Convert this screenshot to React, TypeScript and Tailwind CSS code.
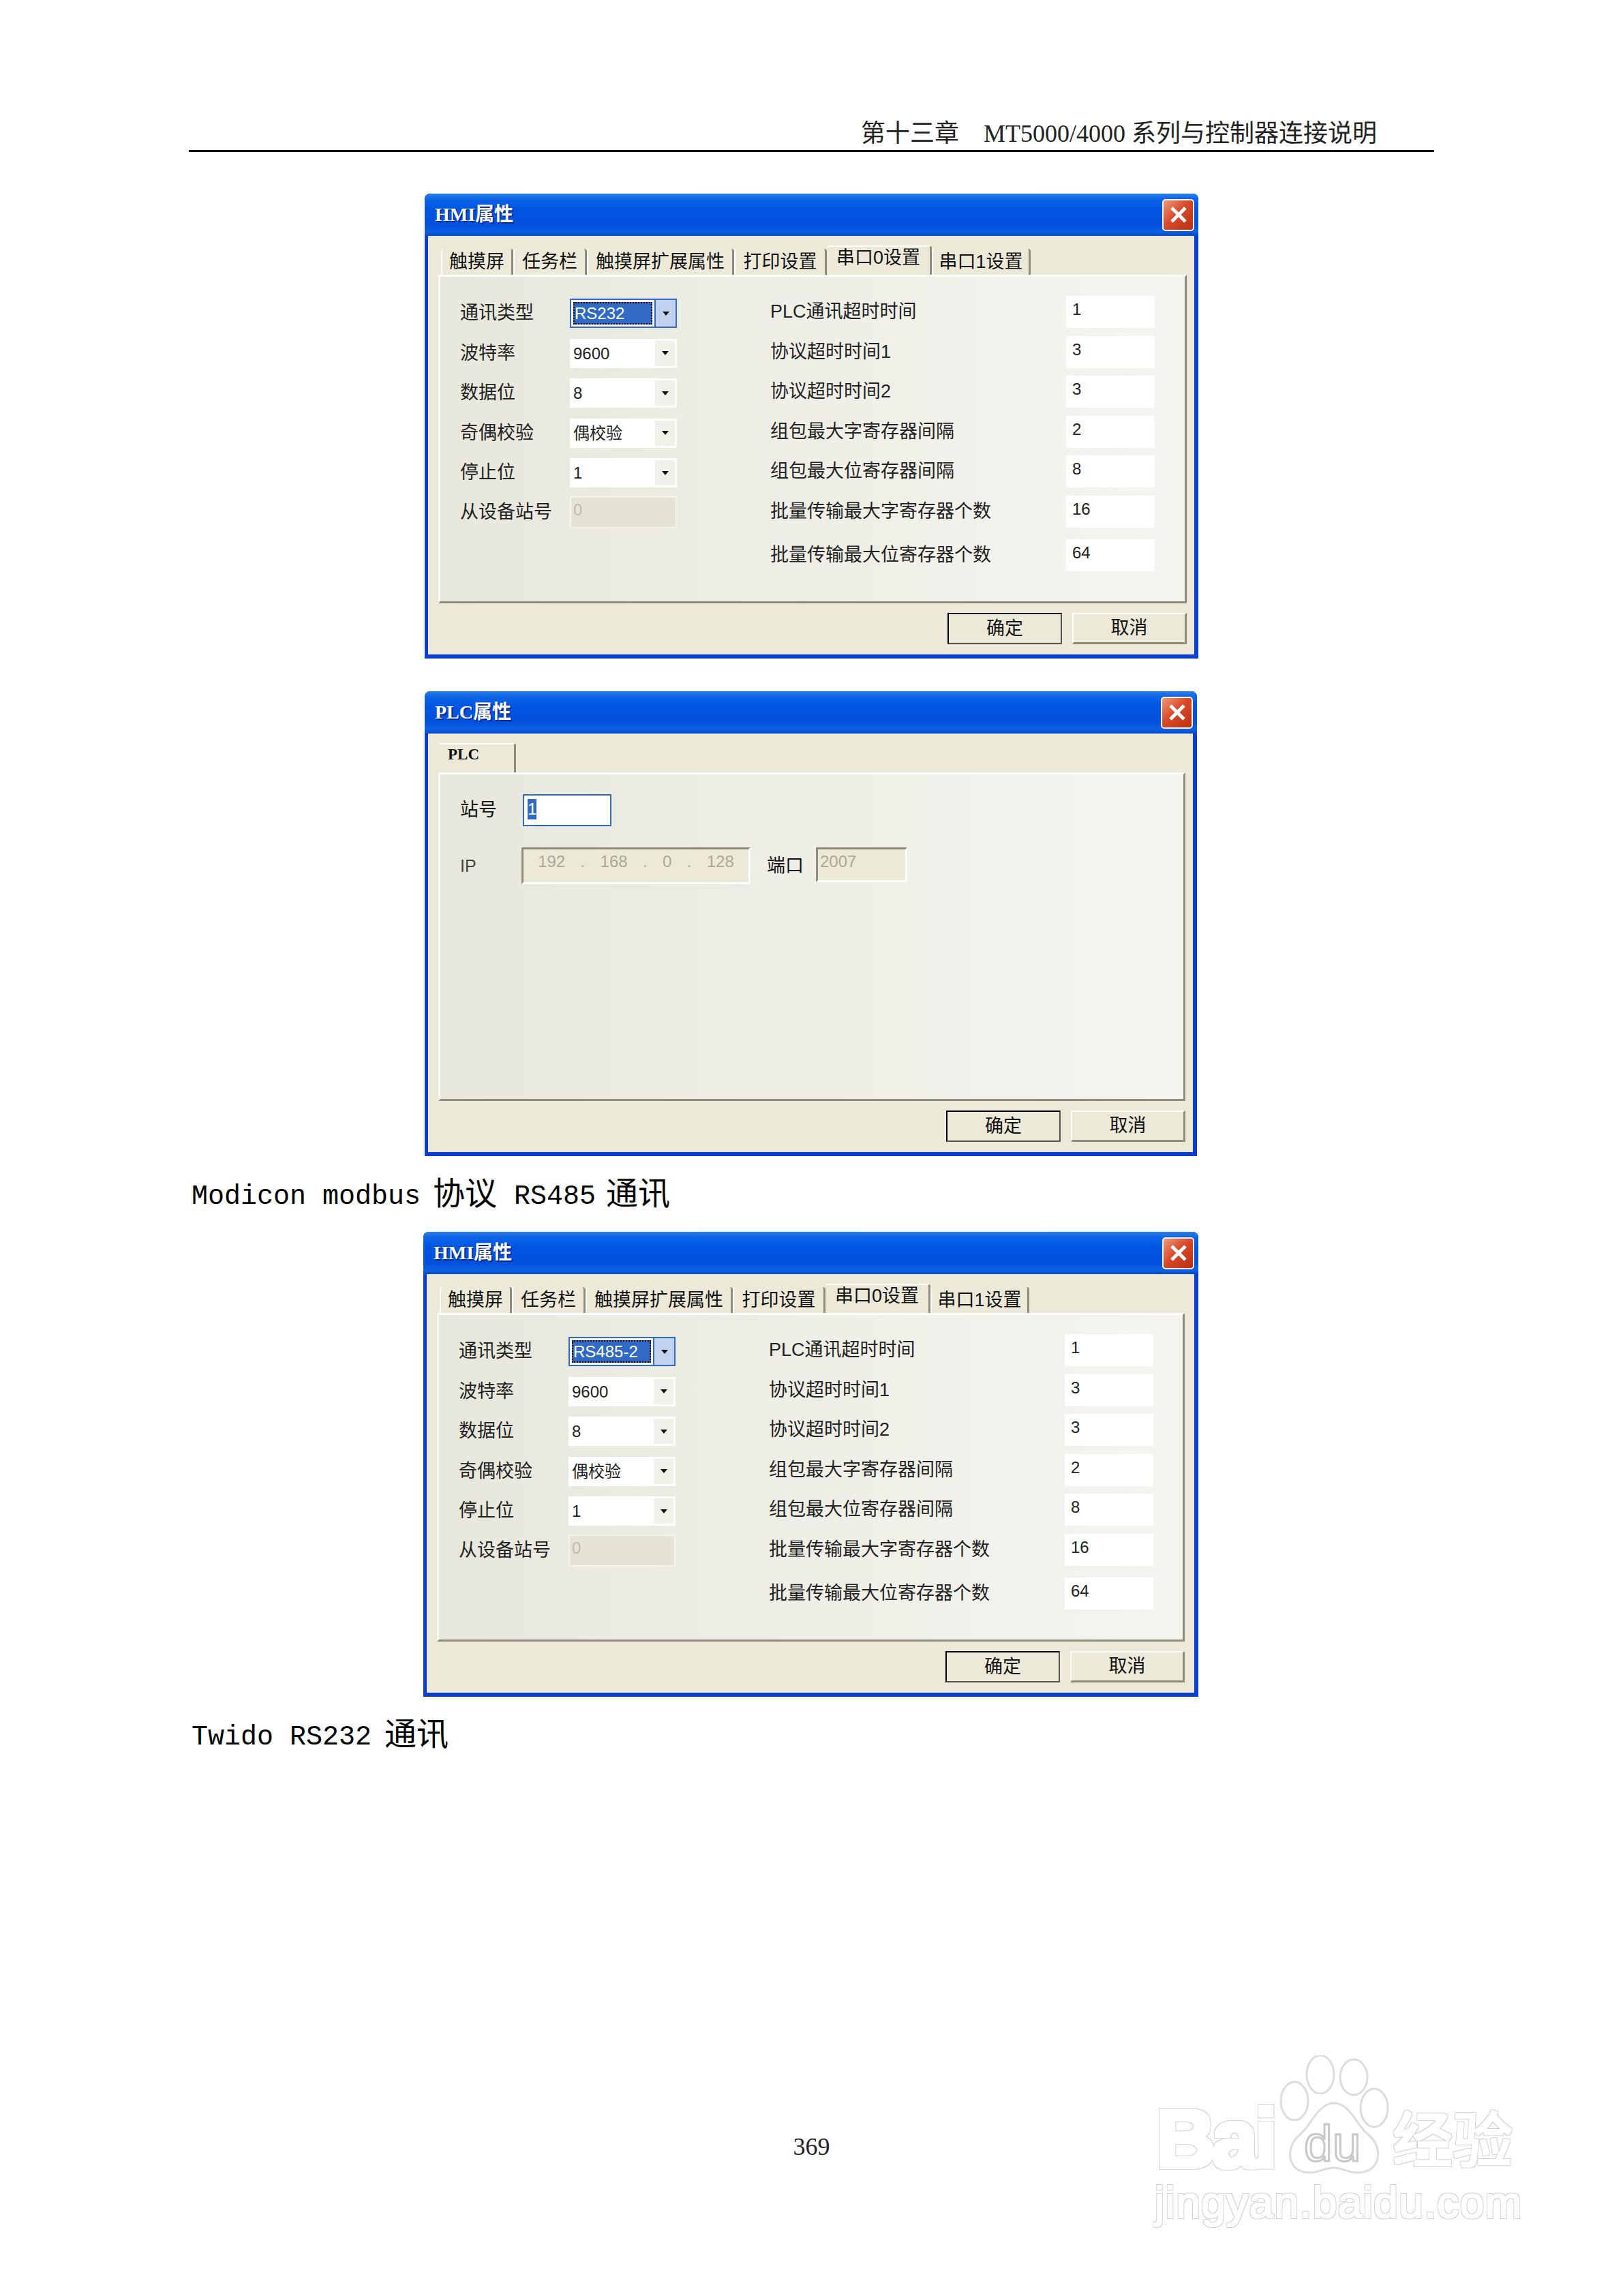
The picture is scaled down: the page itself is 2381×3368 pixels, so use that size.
import type { ReactNode } from "react";

const uiFont = "font-['Liberation_Sans','Noto_Sans_CJK_SC',sans-serif]";

const portTabs = [
  { label: "触摸屏", w: "w-[106px]" },
  { label: "任务栏", w: "w-[108px]" },
  { label: "触摸屏扩展属性", w: "w-[216px]" },
  { label: "打印设置", w: "w-[136px]" },
  { label: "串口0设置", w: "w-[154px]", active: true },
  { label: "串口1设置", w: "w-[145px]" },
];

const timeouts = [
  ["PLC通讯超时时间", "1"],
  ["协议超时时间1", "3"],
  ["协议超时时间2", "3"],
  ["组包最大字寄存器间隔", "2"],
  ["组包最大位寄存器间隔", "8"],
  ["批量传输最大字寄存器个数", "16"],
];

function Arrow() {
  return (
    <svg width="12" height="8" viewBox="0 0 12 8">
      <path d="M1 1h10L6 7z" fill="#111" />
    </svg>
  );
}

function Combo({ value, focused }: { value: string; focused?: boolean }) {
  if (focused) {
    return (
      <div className="w-[157px] h-[43px] flex bg-white border-2 border-[#316ac5]">
        <div className="flex-1 p-[3px]">
          <div className="h-full border-2 border-dotted border-black bg-[#316ac5] text-white text-[24px] leading-[30px] overflow-hidden">
            {value}
          </div>
        </div>
        <div className="w-[31px] flex items-center justify-center bg-[#c1d2ee] border-l-2 border-[#316ac5]">
          <Arrow />
        </div>
      </div>
    );
  }
  return (
    <div className="w-[157px] h-[43px] flex bg-white p-[3px]">
      <div className="flex-1 text-[24px] leading-[38px] pl-[2px] text-[#222]">{value}</div>
      <div className="w-[29px] flex items-center justify-center bg-[#f1f0e9]">
        <Arrow />
      </div>
    </div>
  );
}

function CloseButton() {
  return (
    <div className="w-[47px] h-[47px] rounded-[5px] border-2 border-[#f2f2f2] bg-[linear-gradient(135deg,#ee9a7c,#d9492a_45%,#b8300f)] flex items-center justify-center">
      <svg width="30" height="30" viewBox="0 0 30 30">
        <path d="M5 5l20 20M25 5L5 25" stroke="#fff" strokeWidth="5" />
      </svg>
    </div>
  );
}

function Dialog({
  title,
  width,
  bodyPad = "pr-[11px]",
  tabs,
  children,
}: {
  title: string;
  width: string;
  bodyPad?: string;
  tabs: ReactNode;
  children: ReactNode;
}) {
  return (
    <div className={`${width} h-[682px] flex flex-col rounded-t-[8px] overflow-hidden bg-[#0a3ed0] ${uiFont}`}>
      <div className="h-[62px] shrink-0 flex items-center justify-between pl-[15px] pr-[6px] bg-[linear-gradient(180deg,#2a7fe8_0%,#0f66e6_12%,#0055e3_35%,#0450dc_75%,#0a62e4_90%,#0848c8_100%)]">
        <span className="text-white font-bold text-[28px] leading-none [text-shadow:2px_2px_0_#0a2a90] font-['Liberation_Serif','Noto_Sans_CJK_SC',serif]">
          {title}
        </span>
        <CloseButton />
      </div>
      <div className={`flex-1 ml-[5px] mr-[6px] mb-[6px] bg-[#ece9d8] flex flex-col pl-[15px] ${bodyPad}`}>
        <div className="h-[43px] mt-[14px] shrink-0 flex items-end pl-[4px] text-[27px] text-[#111]">{tabs}</div>
        <div className="h-[482px] shrink-0 border-t-[3px] border-l-[3px] border-t-white border-l-[#f8f8f4] border-r-[3px] border-b-[3px] border-r-[#8e8c7c] border-b-[#8e8c7c] bg-[linear-gradient(90deg,#e7e7dc,#f0f0e9_60%,#f5f5f0)]">
          {children}
        </div>
        <div className="flex justify-end gap-[15px] pt-[14px]">
          <div className="w-[168px] h-[46px] border-2 border-black border-r-[#555] border-b-[#555] bg-[#ece9d8] flex items-center justify-center text-[27px] text-[#111]">
            确定
          </div>
          <div className="w-[168px] h-[46px] border-2 border-white border-r-[3px] border-b-[3px] border-r-[#8e8c7c] border-b-[#8e8c7c] bg-[#ece9d8] flex items-center justify-center text-[27px] text-[#111]">
            取消
          </div>
        </div>
      </div>
    </div>
  );
}

function PortTabs() {
  return (
    <>
      {portTabs.map((t) =>
        t.active ? (
          <div
            key={t.label}
            className={`${t.w} h-[43px] rounded-t-[4px] border-t-2 border-t-white border-r-[3px] border-r-[#8e8c7c] bg-[#ece9d8] text-center leading-[32px]`}
          >
            {t.label}
          </div>
        ) : (
          <div
            key={t.label}
            className={`${t.w} h-[38px] rounded-t-[4px] border-l-2 border-l-white border-r-[3px] border-r-[#8e8c7c] text-center leading-[38px]`}
          >
            {t.label}
          </div>
        ),
      )}
    </>
  );
}

function PortForm({ type }: { type: string }) {
  const left = [
    ["通讯类型", type],
    ["波特率", "9600"],
    ["数据位", "8"],
    ["奇偶校验", "偶校验"],
    ["停止位", "1"],
  ];
  return (
    <div className="flex pl-[29px] pt-[28px] text-[27px] text-[#222]">
      <div className="w-[455px] pt-[4px] flex flex-col gap-[15.5px]">
        {left.map(([label, value], i) => (
          <div key={label} className="flex items-center">
            <span className="w-[161px] leading-[43px]">{label}</span>
            <Combo value={value} focused={i === 0} />
          </div>
        ))}
        <div className="flex items-center -mt-[3px]">
          <span className="w-[161px] leading-[47px]">从设备站号</span>
          <div className="w-[157px] h-[47px] bg-[#e5e3d4] border-2 border-[#f4f3ec] text-[24px] leading-[36px] pl-[3px] text-[#bdbbae]">
            0
          </div>
        </div>
      </div>
      <div className="flex flex-col gap-[11.5px]">
        {timeouts.map(([label, value]) => (
          <div key={label} className="flex items-center">
            <span className="w-[434px] leading-[47px]">{label}</span>
            <div className="w-[130px] h-[47px] bg-white text-[24px] leading-[40px] pl-[9px]">{value}</div>
          </div>
        ))}
        <div className="flex items-center mt-[6px]">
          <span className="w-[434px] leading-[47px]">批量传输最大位寄存器个数</span>
          <div className="w-[130px] h-[47px] bg-white text-[24px] leading-[40px] pl-[9px]">64</div>
        </div>
      </div>
    </div>
  );
}

function PlcForm() {
  return (
    <div className="pl-[29px] pt-[29px] text-[27px] text-[#111]">
      <div className="flex items-center">
        <span className="w-[92px]">站号</span>
        <div className="w-[130px] h-[47px] bg-white border-2 border-[#316ac5] p-[5px] text-[24px] leading-[30px]">
          <span className="inline-block bg-[#316ac5] text-white">1</span>
        </div>
      </div>
      <div className="flex items-start mt-[31px]">
        <span className="w-[90px] leading-[54px] text-[25px] text-[#444]">IP</span>
        <div className="w-[336px] h-[54px] bg-[#ece9d8] border-[3px] border-t-[#8f8c7a] border-l-[#8f8c7a] border-r-white border-b-white flex justify-around px-[10px] text-[24px] leading-[36px] text-[#aca899]">
          <span>192</span>
          <span>.</span>
          <span>168</span>
          <span>.</span>
          <span>0</span>
          <span>.</span>
          <span>128</span>
        </div>
        <span className="ml-[24px] w-[72px] leading-[54px]">端口</span>
        <div className="w-[134px] h-[51px] bg-[#ece9d8] border-[3px] border-t-[#8f8c7a] border-l-[#8f8c7a] border-r-white border-b-white pl-[3px] text-[24px] leading-[36px] text-[#aca899]">
          2007
        </div>
      </div>
    </div>
  );
}

function Caption({ children }: { children: ReactNode }) {
  return (
    <div className="h-[111px] pl-[281px] pt-[8px] flex items-center whitespace-pre text-black text-[40px] font-['Liberation_Mono','Noto_Sans_CJK_SC',monospace]">
      {children}
    </div>
  );
}

function BaiduMark() {
  const outline = { fill: "#ffffff", stroke: "#dcdcdc", strokeWidth: 3 };
  return (
    <svg className="absolute left-[1691px] top-[3015px] blur-[0.5px]" width="544" height="258" viewBox="0 0 544 258">
      <defs>
        <filter id="fat" x="-5%" y="-10%" width="110%" height="120%">
          <feMorphology in="SourceAlpha" operator="dilate" radius="4" result="outer" />
          <feFlood floodColor="#d4d4d4" />
          <feComposite in2="outer" operator="in" result="edge" />
          <feMorphology in="SourceAlpha" operator="dilate" radius="2.5" result="inner" />
          <feFlood floodColor="#ffffff" />
          <feComposite in2="inner" operator="in" result="face" />
          <feMerge>
            <feMergeNode in="edge" />
            <feMergeNode in="face" />
          </feMerge>
        </filter>
        <filter id="slim" x="-5%" y="-10%" width="110%" height="120%">
          <feMorphology in="SourceAlpha" operator="dilate" radius="2" result="outer" />
          <feFlood floodColor="#d4d4d4" />
          <feComposite in2="outer" operator="in" result="edge" />
          <feMorphology in="SourceAlpha" operator="dilate" radius="0.8" result="inner" />
          <feFlood floodColor="#ffffff" />
          <feComposite in2="inner" operator="in" result="face" />
          <feMerge>
            <feMergeNode in="edge" />
            <feMergeNode in="face" />
          </feMerge>
        </filter>
      </defs>
      <ellipse cx="246" cy="28" rx="20" ry="28" {...outline} />
      <ellipse cx="295" cy="32" rx="20" ry="26" {...outline} />
      <ellipse cx="208" cy="67" rx="20" ry="28" {...outline} />
      <ellipse cx="325" cy="77" rx="20" ry="28" {...outline} />
      <path
        d="M266 70C290 70 300 105 318 118C338 135 336 172 300 172C285 172 280 165 266 165C250 165 245 172 230 172C196 172 195 135 214 118C232 105 242 70 266 70Z"
        {...outline}
      />
      <text x="5" y="164" textLength="178" fontFamily="Liberation Sans" fontWeight="700" fontSize="120" filter="url(#fat)">
        Bai
      </text>
      <text x="222" y="155" fontFamily="Liberation Sans" fontSize="75" fill="#ffffff" stroke="#c8c8c8" strokeWidth="3">
        du
      </text>
      <text x="352" y="156" fontFamily="Noto Sans CJK SC" fontWeight="500" fontSize="88" filter="url(#slim)">
        经验
      </text>
      <text x="3" y="238" textLength="538" fontFamily="Liberation Sans" fontSize="64" filter="url(#slim)">
        jingyan.baidu.com
      </text>
    </svg>
  );
}

export default function App() {
  return (
    <div className="relative w-[2381px] h-[3368px] bg-white overflow-hidden">
      <div className="ml-[277px] w-[1827px] h-[223px] border-b-[3px] border-black flex items-end justify-end pr-[84px] pb-[2px] whitespace-pre text-[36px] leading-[44px] text-[#222] font-['Liberation_Serif','Noto_Sans_CJK_SC',serif]">
        第十三章    MT5000/4000 系列与控制器连接说明
      </div>

      <div className="ml-[623px] mt-[61px]">
        <Dialog title="HMI属性" width="w-[1135px]" tabs={<PortTabs />}>
          <PortForm type="RS232" />
        </Dialog>
      </div>

      <div className="ml-[623px] mt-[48px]">
        <Dialog
          title="PLC属性"
          width="w-[1133px]"
          tabs={
            <div className="-ml-[4px] w-[114px] h-[43px] rounded-t-[4px] border-t-2 border-t-white border-r-[3px] border-r-[#8e8c7c] pl-[14px] text-[23px] leading-[30px] font-bold font-['Liberation_Serif',serif]">
              PLC
            </div>
          }
        >
          <PlcForm />
        </Dialog>
      </div>

      <Caption>
        Modicon modbus<span className="ml-[18px] mr-[25px] text-[47px]">协议</span>RS485<span className="ml-[15px] text-[47px]">通讯</span>
      </Caption>

      <div className="ml-[621px]">
        <Dialog title="HMI属性" width="w-[1137px]" bodyPad="pr-[14px]" tabs={<PortTabs />}>
          <PortForm type="RS485-2" />
        </Dialog>
      </div>

      <Caption>
        Twido RS232<span className="ml-[19px] text-[47px]">通讯</span>
      </Caption>

      <div className="mt-[527px] text-center text-[36px] leading-[44px] text-[#222] font-['Liberation_Serif',serif]">369</div>

      <BaiduMark />
    </div>
  );
}
